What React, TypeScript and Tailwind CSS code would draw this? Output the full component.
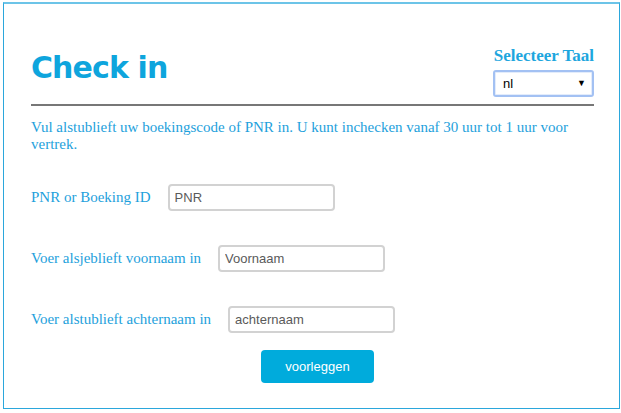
import React from "react";

const serif = "font-['Liberation_Serif','Times_New_Roman',serif]";
const sans = "font-['Liberation_Sans',Arial,sans-serif]";

function Row({ label, placeholder, className }: { label: string; placeholder: string; className: string }) {
  return (
    <div className={`flex items-center gap-[17px] h-[27px] ${className}`}>
      <label className={`${serif} text-[15px] leading-[17px] text-[#1ea1dc] whitespace-nowrap`}>{label}</label>
      <input
        placeholder={placeholder}
        className={`${sans} w-[167px] h-[27px] border-2 border-[#d2d2d2] rounded-[4px] px-[5px] text-[13px] text-[#5a5a5a] placeholder:text-[#5a5a5a] bg-white outline-none`}
      />
    </div>
  );
}

export default function App() {
  return (
    <div className="w-[621px] h-[413px] bg-white overflow-hidden">
      <div className="ml-[3px] mt-[2px] w-[617px] h-[407px] border border-[#2ba7dc] border-t-2 border-t-[#6cc4e8] pl-[27px] pt-[42px]">
        <div className="w-[563px]">
          <div className="flex justify-between items-start">
            <h1 className="mt-[4px] font-['DejaVu_Sans',Verdana,sans-serif] font-bold text-[30px] leading-[36px] tracking-[-0.9px] text-[#0ea5dd]">
              Check in
            </h1>
            <div className="flex flex-col items-end">
              <div className={`${serif} font-bold text-[17px] leading-[20px] text-[#1ea6de]`}>Selecteer Taal</div>
              <div className="relative mt-[4px] w-[101px] h-[27px]">
                <select
                  defaultValue="nl"
                  className={`${sans} appearance-none w-full h-full border-2 border-[#a3c1f3] rounded-[3px] bg-white pl-[8px] text-[13px] text-black outline-none shadow-[inset_0_0_0_1px_#e3ecfb]`}
                >
                  <option value="nl">nl</option>
                  <option value="en">en</option>
                </select>
                <span className="absolute right-[8px] top-[8px] text-[9px] leading-[10px] text-black pointer-events-none">▼</span>
              </div>
            </div>
          </div>
          <div className="mt-[7px] h-[2px] bg-[#777777]" />
          <p className={`${serif} mt-[13px] text-[15px] leading-[17px] text-[#1ea1dc]`}>
            Vul alstublieft uw boekingscode of PNR in. U kunt inchecken vanaf 30 uur tot 1 uur voor vertrek.
          </p>
          <Row label="PNR or Boeking ID" placeholder="PNR" className="mt-[31px]" />
          <Row label="Voer alsjeblieft voornaam in" placeholder="Voornaam" className="mt-[34px]" />
          <Row label="Voer alstublieft achternaam in" placeholder="achternaam" className="mt-[34px]" />
          <button
            className={`${sans} mt-[17px] ml-[230px] w-[113px] h-[33px] rounded-[4px] bg-[#00abdc] text-white text-[13px]`}
          >
            voorleggen
          </button>
        </div>
      </div>
    </div>
  );
}
